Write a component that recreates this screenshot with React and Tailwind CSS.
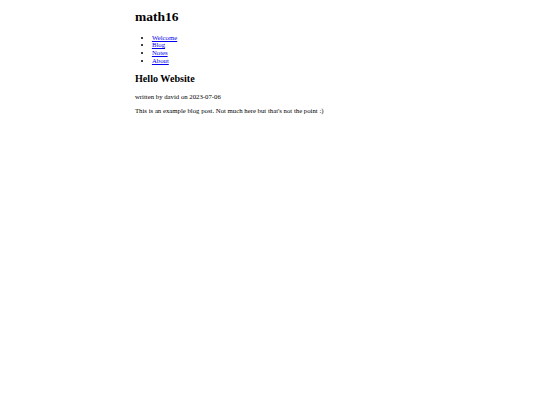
export default function App() {
  return (
    <div className="min-h-[405px] bg-white text-black font-['Liberation_Serif',serif] text-[6.75px] leading-[1.15]">
      <div className="mx-auto w-[270px] pt-px">
        <h1 className="mb-[9px] mt-[8px] text-[13.5px] font-bold leading-[1.15]">math16</h1>
        <ul className="my-[6.75px] list-disc pl-[16.9px]">
          <li><a href="#" className="text-[#0000ee] underline">Welcome</a></li>
          <li><a href="#" className="text-[#0000ee] underline">Blog</a></li>
          <li><a href="#" className="text-[#0000ee] underline">Notes</a></li>
          <li><a href="#" className="text-[#0000ee] underline">About</a></li>
        </ul>
        <h2 className="my-[8.4px] text-[10.125px] font-bold leading-[1.15]">Hello Website</h2>
        <p className="my-[6.75px]">written by david on 2023-07-06</p>
        <p className="my-[6.25px]">This is an example blog post. Not much here but that's not the point :)</p>
      </div>
    </div>
  )
}
